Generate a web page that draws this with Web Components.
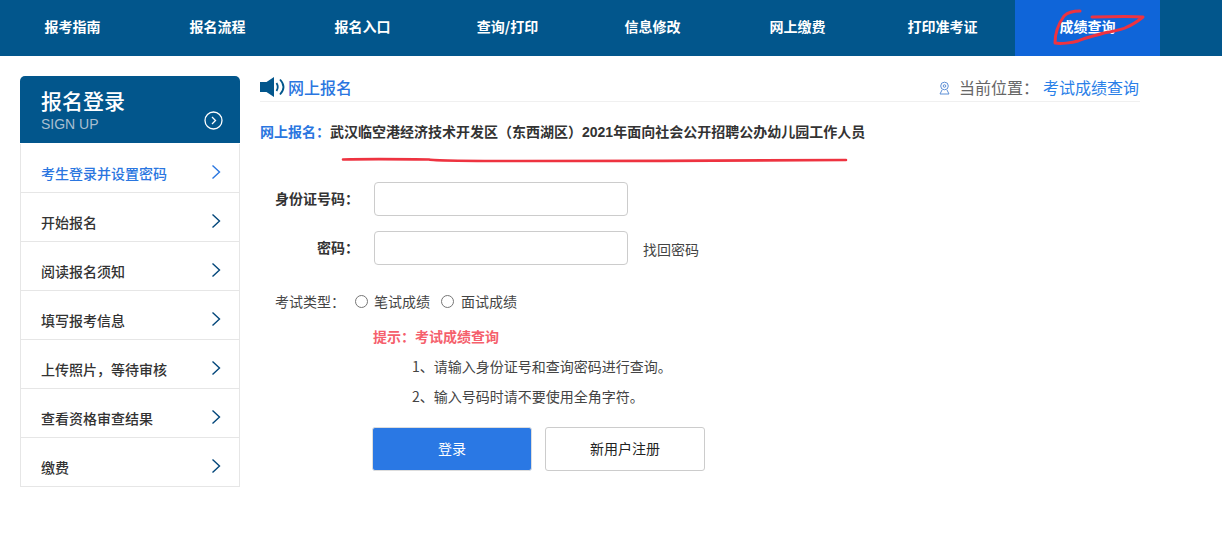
<!DOCTYPE html>
<html lang="zh-CN"><head><meta charset="utf-8"><title>成绩查询</title>
<style>
html,body{margin:0;padding:0;background:#fff}
body{font-family:"Noto Sans CJK SC","Liberation Sans",sans-serif;width:1222px;height:539px;overflow:hidden;position:relative}
.content{display:flex;gap:20px;padding:20px 0 0 20px;width:1120px}
.scribble{position:absolute;left:0;top:0;pointer-events:none}
</style></head><body>
<top-nav></top-nav>
<div class="content">
<side-menu>
<menu-row active>考生登录并设置密码</menu-row>
<menu-row>开始报名</menu-row>
<menu-row>阅读报名须知</menu-row>
<menu-row>填写报考信息</menu-row>
<menu-row>上传照片，等待审核</menu-row>
<menu-row>查看资格审查结果</menu-row>
<menu-row>缴费</menu-row>
</side-menu>
<main-panel></main-panel>
</div>
<svg class="scribble" width="1222" height="539" fill="none" stroke="#ee3340" stroke-linecap="round" stroke-linejoin="round">
<path stroke-width="3" d="M1080 11C1073 11 1068 12 1064 16C1059 23 1055 33 1055 43C1060 44 1072 43 1078 41C1087 37 1094 36 1104 33C1114 31 1122 30 1127 27C1132 25 1138 21 1143 17C1132 16 1110 16.500 1092 17"/>
<path stroke-width="2.600" d="M343 159.500C360 159 395 159 429 159.500C436 161 470 161 520 161C620 161 760 161 846 160"/>
</svg>
<script>
function def(name,html){customElements.define(name,class extends HTMLElement{constructor(){super();this.attachShadow({mode:"open"}).innerHTML=html}})}
const items=["报考指南","报名流程","报名入口","查询/打印","信息修改","网上缴费","打印准考证","成绩查询"];
def("top-nav",`<style>
:host{display:flex;height:56px;background:#02568c}
a{display:block;width:145px;text-align:center;line-height:53px;color:#fff;font-size:14px;font-weight:700;text-decoration:none}
a.on{background:#0f65d9}
</style>`+items.map((t,i)=>`<a class="${i==7?"on":""}">${t}</a>`).join(""));
def("side-menu",`<style>
:host{display:block;width:220px;flex:none}
header{height:67px;box-sizing:border-box;background:#02568c;border-radius:5px 5px 0 0;color:#fff;padding:10px 0 0 21px;position:relative}
h2{margin:0;font-size:21px;line-height:28px;font-weight:500}
p{margin:2px 0 0;font:14px/16px "Liberation Sans",sans-serif;color:#a9bfd0}
svg{position:absolute;left:184px;top:35px}
.list{padding-top:1px}
</style><header><h2>报名登录</h2><p>SIGN UP</p><svg width="19" height="19" fill="none" stroke="#fff"><circle cx="9.500" cy="9.500" r="8.500" stroke-width="1.300"/><path d="M8 6l3.500 3.500L8 13" stroke-width="1.300"/></svg></header><div class="list"><slot></slot></div>`);
customElements.define("menu-row",class extends HTMLElement{constructor(){super();this.attachShadow({mode:"open"}).innerHTML=`<style>
:host{display:flex;justify-content:space-between;box-sizing:border-box;height:49px;border:solid #e6e6e6;border-width:0 1px 1px;padding:0 18px 0 20px;font-size:14px;font-weight:500;color:#333}
:host([active]){color:#2a76e0}
span{margin-top:19px;line-height:20px}
svg{margin-top:20px;color:#02467a}
:host([active]) svg{color:#2a76e0}
</style><span><slot></slot></span><svg width="10" height="16" fill="none" stroke="currentColor" stroke-width="1.400"><path d="M1.500 1.500L8.500 8L1.500 14.500"/></svg>`}});
def("main-panel",`<style>
:host{display:block;width:880px;color:#333}
.head{display:flex;align-items:center;height:25px;border-bottom:1px solid #f0f0f0}
.head h1{margin:-4px 0 0 3px;font-size:16px;line-height:24px;font-weight:500;color:#2a76e0}
.loc{margin:-4px 1px 0 auto;display:flex;align-items:center;font-size:16px;color:#666}
.loc svg{margin:2px 9px 0 0}.loc b{font-weight:400;color:#2a80e8;margin-left:4px}
.title{margin:19px 0 0;height:20px;font-size:14px;line-height:20px;font-weight:700;color:#333}
.title span{color:#2a76e0}.title i{font-style:normal;font-family:"Liberation Sans","Noto Sans CJK SC",sans-serif}
.type{display:flex;align-items:center;font-size:14px;color:#444;margin:26px 0 0 15px;height:20px}
.type u{text-decoration:none;flex:none;width:13px;height:13px;box-sizing:border-box;border:1px solid #767676;border-radius:50%;margin:1px 6px 0 10px}
.type span+u{margin:1px 7px 0 11px}
.tip{margin:15px 0 0 113px;font-size:14px;line-height:20px;font-weight:700;color:#f5606c}
ol{list-style:none;margin:0 0 0 152px;padding:0;font-size:14px;color:#444}
li{line-height:20px;margin-top:10px}
.btns{display:flex;gap:13px;margin:21px 0 0 112px}
.btns a{display:block;box-sizing:border-box;width:160px;height:44px;border:1px solid #ccc;border-radius:3px;text-align:center;line-height:41px;font-size:14px;color:#222}
.btns a.p{background:#2a78e4;color:#fff;border-color:#ddd}
</style>
<div class="head"><svg width="25" height="24" style="margin-top:-3px"><path fill="#02568c" d="M0 7h6.500l7.500-5v20l-7.500-5H0z"/><path fill="none" stroke="#02568c" stroke-width="1.800" d="M16.500 8q2.500 4 0 8M20 4.500q7 7.500 0 15"/></svg><h1>网上报名</h1>
<div class="loc"><svg width="11" height="14" fill="none" stroke="#5d8fd6"><circle cx="5.500" cy="5" r="3.800"/><circle cx="5.500" cy="5" r="1.300"/><path d="M3 9L1 13h9L8 9"/></svg>当前位置：<b>考试成绩查询</b></div></div>
<div class="title"><span>网上报名：</span><i>武汉临空港经济技术开发区（东西湖区）2021年面向社会公开招聘公办幼儿园工作人员</i></div>
<form-row label="身份证号码：" style="margin-top:41px"></form-row>
<form-row label="密码：" link="找回密码" style="margin-top:15px"></form-row>
<div class="type">考试类型：<u></u><span>笔试成绩</span><u></u><span>面试成绩</span></div>
<div class="tip">提示：考试成绩查询</div>
<ol><li>1、请输入身份证号和查询密码进行查询。</li><li>2、输入号码时请不要使用全角字符。</li></ol>
<div class="btns"><a class="p">登录</a><a>新用户注册</a></div>`);
customElements.define("form-row",class extends HTMLElement{constructor(){super();this.attachShadow({mode:"open"})}
connectedCallback(){this.shadowRoot.innerHTML=`<style>
:host{display:flex;align-items:center;font-size:14px;height:34px}
label{width:99px;text-align:right;font-weight:700;color:#333;margin:-2px 15px 0 0}
div{width:254px;height:34px;box-sizing:border-box;border:1px solid #ccc;border-radius:4px;margin-right:15px}
span{color:#444;margin-top:1px}
</style><label>${this.getAttribute("label")}</label><div></div><span>${this.getAttribute("link")||""}</span>`}});
</script>
</body></html>
